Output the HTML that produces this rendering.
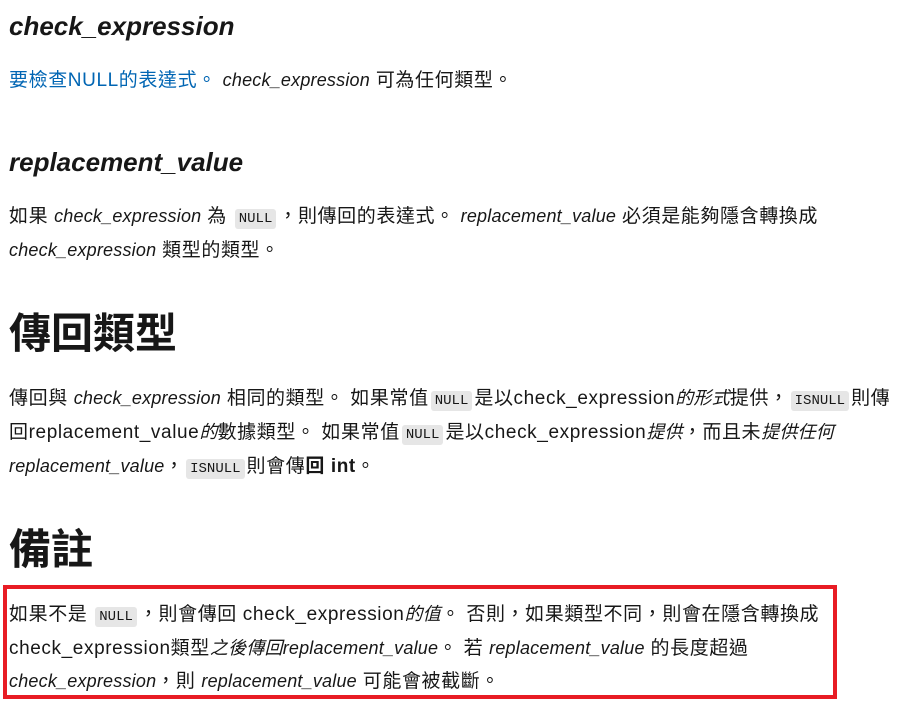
<!DOCTYPE html>
<html><head><meta charset="utf-8"><style>
body{margin:0;width:920px;height:706px;background:#fff;color:#171717;font-family:"Liberation Sans","Noto Sans CJK TC",sans-serif;position:relative;overflow:hidden}
.l{position:absolute;left:9px;font-size:19px;white-space:nowrap;line-height:24px;letter-spacing:0.6px}
.l i{font-size:18px;letter-spacing:0.2px}
.h3{position:absolute;left:9px;font-size:26px;font-weight:bold;font-style:italic;line-height:32px}
.h2{position:absolute;left:9px;font-size:42px;font-weight:bold;line-height:48px}
code{font-family:"Liberation Mono",monospace;font-size:14px;background:#e6e6e6;border-radius:3px;padding:2px 4px;margin:0 2px;letter-spacing:0}
a{color:#0065b3;text-decoration:none}
i{font-style:italic}
.box{position:absolute;left:3px;top:585px;width:826px;height:106px;border:4px solid #e81c24}
</style></head><body>
<div class="h3" style="top:10px">check_expression</div>
<div class="l" style="top:68px"><a>要檢查NULL的表達式。</a> <i>check_expression</i> 可為任何類型。</div>
<div class="h3" style="top:146px">replacement_value</div>
<div class="l" style="top:204px">如果 <i>check_expression</i> 為 <code>NULL</code>，則傳回的表達式。 <i>replacement_value</i> 必須是能夠隱含轉換成</div>
<div class="l" style="top:238px"><i>check_expression</i> 類型的類型。</div>
<div class="h2" style="top:310px">傳回類型</div>
<div class="l" style="top:386px">傳回與 <i>check_expression</i> 相同的類型。 如果常值<code>NULL</code>是以check_expression<i>的形式</i>提供，<code>ISNULL</code>則傳</div>
<div class="l" style="top:420px">回replacement_value<i>的</i>數據類型。 如果常值<code>NULL</code>是以check_expression<i>提供</i>，而且未<i>提供任何</i></div>
<div class="l" style="top:454px"><i>replacement_value</i>，<code>ISNULL</code>則會傳<b>回 int</b>。</div>
<div class="h2" style="top:526px">備註</div>
<div class="box"></div>
<div class="l" style="top:602px">如果不是 <code>NULL</code>，則會傳回 check_expression<i>的值</i>。 否則，如果類型不同，則會在隱含轉換成</div>
<div class="l" style="top:636px">check_expression類型<i>之後傳回replacement_value</i>。 若 <i>replacement_value</i> 的長度超過</div>
<div class="l" style="top:669px"><i>check_expression</i>，則 <i>replacement_value</i> 可能會被截斷。</div>
</body></html>
